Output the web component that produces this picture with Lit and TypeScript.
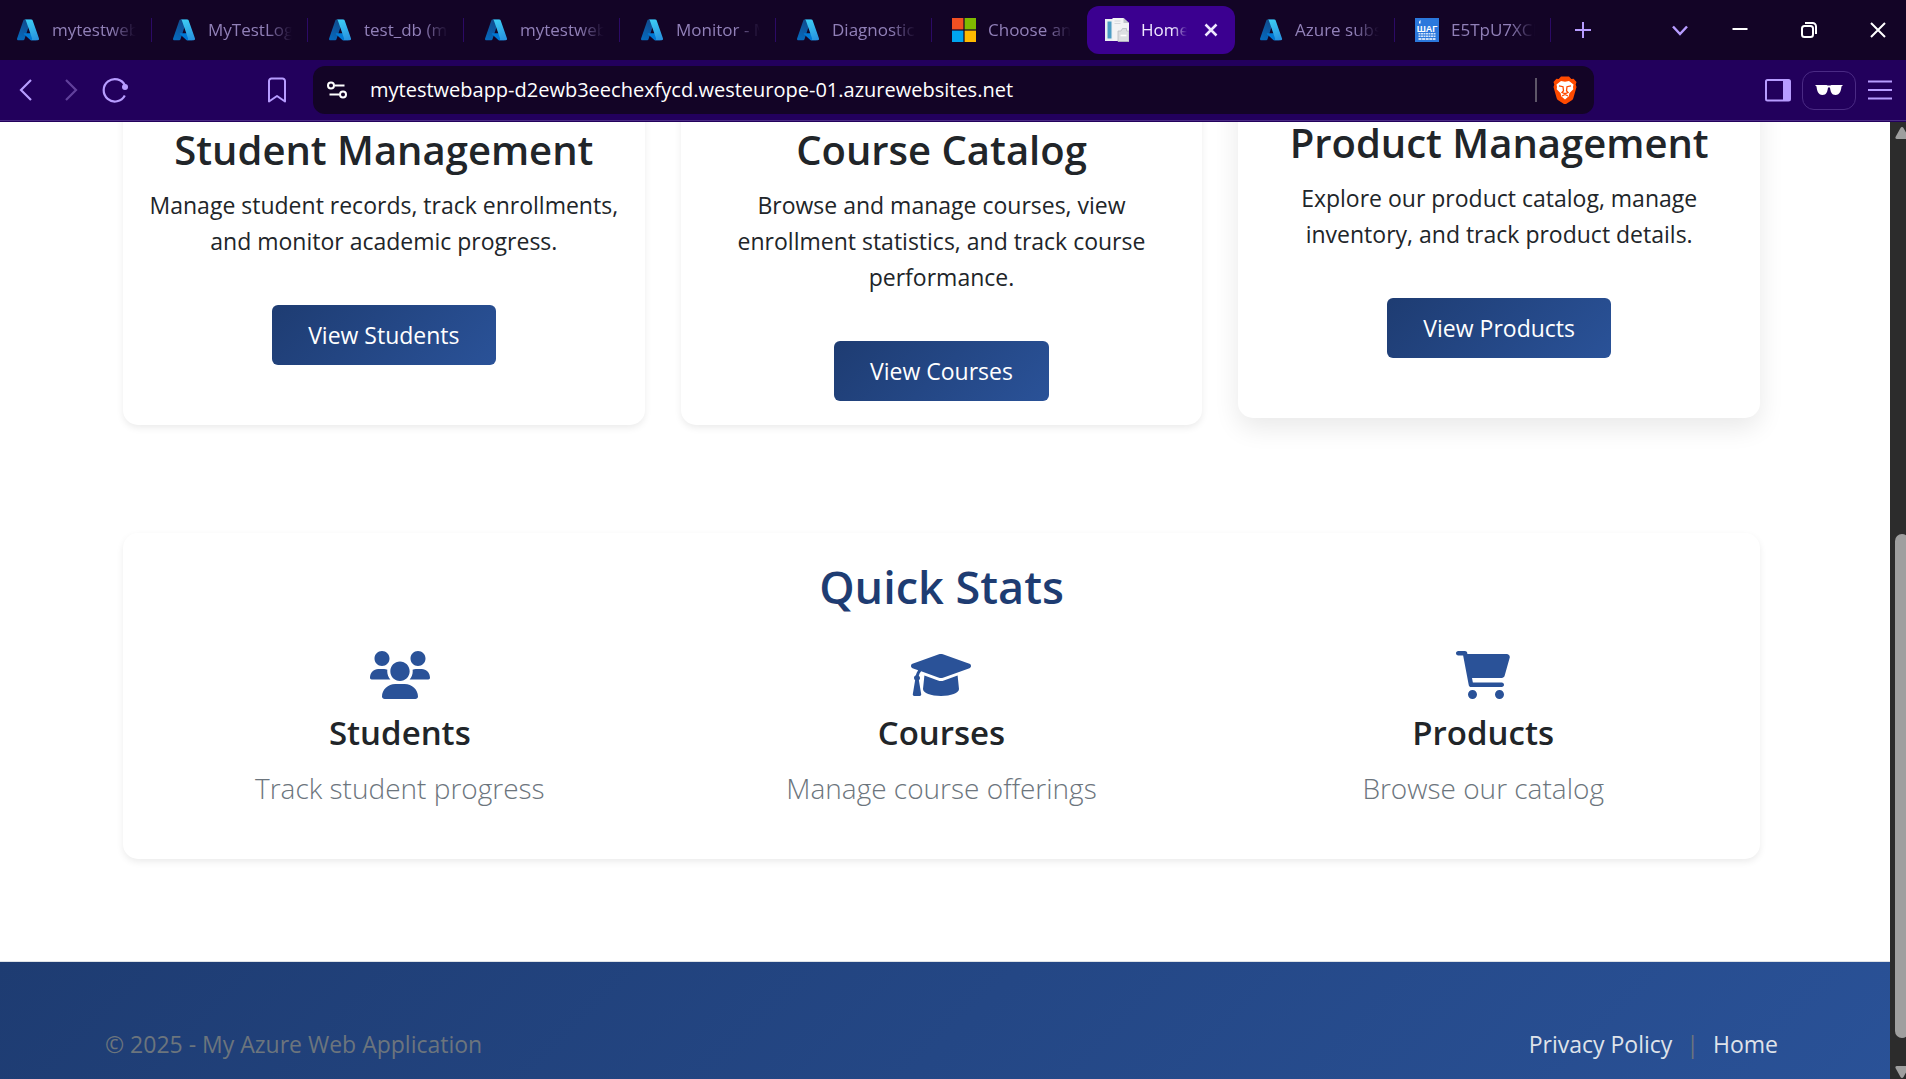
import { LitElement, html, css, svg } from "lit";
import { customElement, property } from "lit/decorators.js";
import { classMap } from "lit/directives/class-map.js";

type Favicon = "azure" | "microsoft" | "page" | "step";

interface Tab {
  title: string;
  icon: Favicon;
  active?: boolean;
}

interface Feature {
  title: string;
  text: string;
  action: string;
  raised?: boolean;
}

interface Stat {
  title: string;
  text: string;
  box: string;
  path: string;
}

const TABS: Tab[] = [
  { title: "mytestwebapp", icon: "azure" },
  { title: "MyTestLogs", icon: "azure" },
  { title: "test_db (mytest", icon: "azure" },
  { title: "mytestwebapp", icon: "azure" },
  { title: "Monitor - M", icon: "azure" },
  { title: "Diagnostic s", icon: "azure" },
  { title: "Choose an a", icon: "microsoft" },
  { title: "Home P", icon: "page", active: true },
  { title: "Azure subsc", icon: "azure" },
  { title: "E5TpU7XCk", icon: "step" },
];

const FEATURES: Feature[] = [
  {
    title: "Student Management",
    text: "Manage student records, track enrollments, and monitor academic progress.",
    action: "View Students",
  },
  {
    title: "Course Catalog",
    text: "Browse and manage courses, view enrollment statistics, and track course performance.",
    action: "View Courses",
  },
  {
    title: "Product Management",
    text: "Explore our product catalog, manage inventory, and track product details.",
    action: "View Products",
    raised: true,
  },
];

const STATS: Stat[] = [
  {
    title: "Students",
    text: "Track student progress",
    box: "0 0 640 512",
    path: "M319.9 320c57.41 0 103.1-46.56 103.1-104c0-57.44-46.54-104-103.1-104c-57.41 0-103.1 46.56-103.1 104C215.9 273.4 262.5 320 319.9 320zM369.9 352H270.1C191.6 352 128 411.7 128 485.3C128 500.1 140.7 512 156.4 512h327.2C499.3 512 512 500.1 512 485.3C512 411.7 448.4 352 369.9 352zM512 160c44.18 0 80-35.82 80-80S556.2 0 512 0c-44.18 0-80 35.82-80 80S467.8 160 512 160zM183.9 216c0-5.449 .9824-10.63 1.609-15.91C174.6 194.1 162.6 192 149.9 192H88.08C39.44 192 0 233.8 0 285.3C0 295.6 7.887 304 17.62 304h199.5C196.7 280.2 183.9 249.7 183.9 216zM128 160c44.18 0 80-35.82 80-80S172.2 0 128 0C83.82 0 48 35.82 48 80S83.82 160 128 160zM551.9 192h-61.84c-12.8 0-24.88 3.037-35.86 8.24C454.8 205.5 455.8 210.6 455.8 216c0 33.71-12.78 64.21-33.16 88h199.7C632.1 304 640 295.6 640 285.3C640 233.8 600.6 192 551.9 192z",
  },
  {
    title: "Courses",
    text: "Manage course offerings",
    box: "0 0 640 512",
    path: "M623.1 136.9l-282.7-101.2c-13.73-4.91-28.7-4.91-42.43 0L16.05 136.9C6.438 140.4 0 149.6 0 160s6.438 19.65 16.05 23.09L76.07 204.6c-11.89 15.8-20.26 34.16-24.55 53.95C40.05 263.4 32 274.8 32 288c0 9.953 4.814 18.49 11.94 24.36l-24.83 149C17.48 471.1 25 480 34.89 480H93.11c9.887 0 17.41-8.879 15.78-18.63l-24.83-149C91.19 306.5 96 297.1 96 288c0-10.29-5.174-19.03-12.72-24.89c4.252-17.76 12.88-33.82 24.94-47.03l190.6 68.23c13.73 4.91 28.7 4.91 42.43 0l282.7-101.2C633.6 179.6 640 170.4 640 160S633.6 140.4 623.1 136.9zM351.1 314.4C341.7 318.1 330.9 320 320 320c-10.92 0-21.69-1.867-32-5.555L142.8 262.5L128 405.3C128 446.6 213.1 480 320 480c105.1 0 192-33.4 192-74.67l-14.78-142.9L351.1 314.4z",
  },
  {
    title: "Products",
    text: "Browse our catalog",
    box: "0 0 576 512",
    path: "M96 0C107.5 0 117.4 8.19 119.6 19.51L121.1 32H541.8C562.1 32 578.3 52.25 572.6 72.66L518.6 264.7C514.7 278.5 502.1 288 487.8 288H170.7L179.9 336H488C501.3 336 512 346.7 512 360C512 373.3 501.3 384 488 384H159.1C148.5 384 138.6 375.8 136.4 364.5L76.14 48H24C10.75 48 0 37.25 0 24C0 10.75 10.75 0 24 0H96zM128 464C128 437.5 149.5 416 176 416C202.5 416 224 437.5 224 464C224 490.5 202.5 512 176 512C149.5 512 128 490.5 128 464zM512 464C512 490.5 490.5 512 464 512C437.5 512 416 490.5 416 464C416 437.5 437.5 416 464 416C490.5 416 512 437.5 512 464z",
  },
];

const FAVICONS = {
  azure: svg`
    <defs>
      <linearGradient id="az-left" x1="0.6" y1="0" x2="0.3" y2="1">
        <stop offset="0" stop-color="#114a8b" /><stop offset="1" stop-color="#0669bc" />
      </linearGradient>
      <linearGradient id="az-right" x1="0.4" y1="0" x2="0.7" y2="1">
        <stop offset="0" stop-color="#3ccbf4" /><stop offset="1" stop-color="#2892df" />
      </linearGradient>
    </defs>
    <path d="M8.6 1.5H15L8.5 21.3a1.4 1.4 0 0 1-1.3 1H2.4A1.3 1.3 0 0 1 1.1 20.5L7.3 2.5a1.4 1.4 0 0 1 1.3-1z" fill="url(#az-left)" />
    <path d="M18 15.2H8.4a.6.6 0 0 0-.4 1.1l6.300 5.700c.2.2.5.3.8.3h5.400z" fill="#0078d4" />
    <path d="M16.7 2.5a1.4 1.4 0 0 0-1.300-1H8.6c.6 0 1.1.4 1.3 1l6.2 18a1.4 1.4 0 0 1-1.3 1.800h6.900a1.4 1.4 0 0 0 1.3-1.800z" fill="url(#az-right)" />`,
  microsoft: svg`
    <path d="M0 0h11.4v11.4H0z" fill="#f25022" />
    <path d="M12.6 0H24v11.4H12.6z" fill="#7fba00" />
    <path d="M0 12.6h11.4V24H0z" fill="#00a4ef" />
    <path d="M12.6 12.6H24V24H12.6z" fill="#ffb900" />`,
  page: svg`
    <path d="M0 1h9v22H0z" fill="#e9eef2" />
    <path d="M2.500 3.500h4v17h-4z" fill="#4a9cc4" />
    <path d="M7.500 0h11L24 5v18H7.500z" fill="#f3f4f5" />
    <path d="M18.500 0 24 5h-5.500z" fill="#c2c7cc" />
    <path d="M9.500 3h6M9.500 5.500h6" stroke="#d4d8dc" />
    <path d="M13 13h3l1.500-2.500h4V13H24v10.500H13z" fill="#dcdfe2" stroke="#b8bdc2" stroke-width=".8" />
    <path d="M15.500 17.500h6" stroke="#fff" stroke-width="1.600" />`,
  step: svg`
    <path d="M0 0h24v24H0z" fill="#2b78dc" />
    <path d="M4 5.500V3.500L5.500 2v3.500z" fill="#fff" />
    <text x="12" y="13.500" text-anchor="middle" font-family="Liberation Sans Narrow, Liberation Sans, sans-serif" font-weight="700" font-size="9" fill="#fff">ШАГ</text>
    <path d="M3.500 15.800h17M3.500 18.300h17" stroke="#cfe2fa" stroke-width="1.500" stroke-dasharray="2 .5" />
    <path d="M3.500 21h17" stroke="#fff" stroke-width="1.600" stroke-dasharray="3 .6" />`,
};

@customElement("browser-tab")
class BrowserTab extends LitElement {
  @property({ attribute: false }) tab!: Tab;
  @property({ type: Boolean, reflect: true }) active = false;
  @property({ type: Boolean, reflect: true }) divided = false;

  static styles = css`
    :host {
      display: flex;
      align-items: center;
      flex: 0 1 135px;
      height: 48px;
      min-width: 0;
    }
    :host([divided]) {
      flex-basis: 156px;
      background: linear-gradient(#2c0a66, #2c0a66) right 20px center / 1px 24px no-repeat;
    }
    :host([active]) {
      flex-basis: 148px;
      box-sizing: border-box;
      margin-right: 24px;
      padding: 0 12px 0 18px;
      border-radius: 12px;
      background: #3b0090;
    }
    .select {
      display: flex;
      align-items: center;
      gap: 12px;
      min-width: 0;
      flex: 1;
      height: 100%;
      padding: 0 16px 0 0;
      border: 0;
      background: none;
      color: #9180b8;
      font: 17px/24px "Open Sans", "Noto Sans", sans-serif;
      text-align: left;
    }
    .select.divided {
      padding-right: 36px;
    }
    .icon {
      display: block;
      width: 24px;
      height: 24px;
      flex: none;
    }
    .title {
      flex: 1;
      min-width: 0;
      overflow: hidden;
      white-space: nowrap;
      mask-image: linear-gradient(90deg, #000 70%, transparent);
    }
    .select.active {
      color: #efe8ff;
      padding-right: 12px;
    }
    .close {
      width: 24px;
      height: 24px;
      padding: 0;
      border: 0;
      background: none;
      color: #efe8ff;
    }
  `;

  render() {
    return html`
      <button class=${classMap({ select: true, active: this.active, divided: this.divided })}>
        <svg class="icon" viewBox="0 0 24 24">${FAVICONS[this.tab.icon]}</svg>
        <span class="title">${this.tab.title}</span>
      </button>
      ${this.active
        ? html`<button class="close" aria-label="Close tab">
            <svg class="icon" viewBox="0 0 24 24" fill="none" stroke="currentColor" stroke-width="2.500">
              <path d="M6.500 6.500l11 11M17.500 6.500l-11 11" />
            </svg>
          </button>`
        : null}
    `;
  }
}

@customElement("browser-chrome")
class BrowserChrome extends LitElement {
  static styles = css`
    :host {
      display: block;
      font-family: "Open Sans", "Noto Sans", sans-serif;
    }
    button {
      display: grid;
      place-items: center;
      flex: none;
      padding: 0;
      border: 0;
      background: none;
      color: #b79cff;
    }
    svg {
      display: block;
      fill: none;
      stroke: currentColor;
      stroke-width: 2;
    }
    .solid {
      stroke: none;
    }
    .strip {
      display: flex;
      align-items: center;
      height: 60px;
      padding: 0 16px;
      background: #130426;
    }
    .tabs {
      display: flex;
      align-items: center;
      flex: 0 1 auto;
      min-width: 0;
    }
    .add {
      width: 24px;
      height: 24px;
    }
    .window {
      display: flex;
      align-items: center;
      gap: 45px;
      margin-left: auto;
    }
    .window button {
      width: 24px;
      height: 24px;
      color: #fff;
    }
    .window .search {
      margin-right: -9px;
      color: #b79cff;
    }
    .bar {
      display: flex;
      align-items: center;
      height: 60px;
      padding: 0 12px;
      background: #22005c;
      border-bottom: 1px solid #4a2a84;
      box-shadow: 0 1px #22005c;
    }
    .nav {
      display: flex;
      gap: 16px;
    }
    .nav button,
    .mark {
      width: 28px;
      height: 28px;
    }
    .nav .off {
      color: #61409c;
    }
    .mark {
      margin-left: 136px;
    }
    .address {
      display: flex;
      align-items: center;
      flex: 1;
      height: 48px;
      box-sizing: border-box;
      margin: 0 170px 0 21px;
      padding: 0 16px 0 12px;
      border-radius: 12px;
      background: #130426;
    }
    .address button {
      color: #fff;
    }
    .url {
      flex: 1;
      min-width: 0;
      margin: 0 0 0 21px;
      padding: 0;
      border: 0;
      outline: 0;
      background: none;
      color: #fff;
      font: 20px/28px "Open Sans", "Noto Sans", sans-serif;
    }
    .rule {
      width: 2px;
      height: 24px;
      margin-right: 15px;
      background: #5e5668;
    }
    .tools {
      display: flex;
      align-items: center;
      gap: 10px;
    }
    .private {
      width: 54px;
      height: 39px;
      box-sizing: border-box;
      border: 1px solid #4a2a84;
      border-radius: 12px;
    }
  `;

  render() {
    return html`
      <div class="strip">
        <div class="tabs">
          ${TABS.map(
            (tab, i) => html`<browser-tab
              .tab=${tab}
              ?active=${tab.active}
              ?divided=${!tab.active && !TABS[i + 1]?.active}
            ></browser-tab>`,
          )}
        </div>
        <button class="add" aria-label="New tab">
          <svg width="24" height="24" viewBox="0 0 24 24"><path d="M12 4v16M4 12h16" /></svg>
        </button>
        <div class="window">
          <button class="search" aria-label="Search tabs">
            <svg width="24" height="24" viewBox="0 0 24 24"><path d="M5 8.500l7 7.500 7-7.500" stroke-width="2.500" /></svg>
          </button>
          <button aria-label="Minimize">
            <svg width="24" height="24" viewBox="0 0 24 24"><path d="M4.500 11h15" /></svg>
          </button>
          <button aria-label="Restore">
            <svg width="24" height="24" viewBox="0 0 24 24">
              <rect x="5" y="8" width="11" height="11" rx="2.500" />
              <path d="M8 5h7.500A3.500 3.500 0 0 1 19 8.500V16" />
            </svg>
          </button>
          <button aria-label="Close">
            <svg width="24" height="24" viewBox="0 0 24 24"><path d="M5 5l14 14M19 5L5 19" /></svg>
          </button>
        </div>
      </div>
      <div class="bar">
        <div class="nav">
          <button aria-label="Back">
            <svg width="28" height="28" viewBox="0 0 28 28"><path d="M19 4L9 14l10 10" stroke-width="2.200" /></svg>
          </button>
          <button class="off" aria-label="Forward">
            <svg width="28" height="28" viewBox="0 0 28 28"><path d="M10 4l10 10-10 10" stroke-width="2.200" /></svg>
          </button>
          <button aria-label="Reload">
            <svg width="28" height="28" viewBox="0 0 28 28">
              <path d="M25 9.500A11.200 11.200 0 1 0 24.800 19.500" stroke-width="2.200" />
              <circle cx="25" cy="11" r="3" fill="currentColor" stroke="none" />
            </svg>
          </button>
        </div>
        <button class="mark" aria-label="Bookmark this page">
          <svg width="28" height="28" viewBox="0 0 28 28">
            <path d="M7.500 2.500h11a2.500 2.500 0 0 1 2.500 2.500v20.500l-8-5.500-8 5.500V5a2.500 2.500 0 0 1 2.500-2.500z" stroke-linejoin="round" />
          </svg>
        </button>
        <div class="address">
          <button aria-label="Site settings">
            <svg width="24" height="24" viewBox="0 0 24 24">
              <circle cx="6" cy="7.500" r="3" /><path d="M10 7.500h9.500" />
              <circle cx="18" cy="16.500" r="3" /><path d="M4.500 16.500H14" />
            </svg>
          </button>
          <input
            class="url"
            type="text"
            aria-label="Address"
            value="mytestwebapp-d2ewb3eechexfycd.westeurope-01.azurewebsites.net"
          />
          <span class="rule"></span>
          <button aria-label="Brave Shields">
            <svg class="solid" width="26" height="28" viewBox="0 0 26 28">
              <path d="M9 .5h8l2.300 2.600 2.300-.3L24.500 6l-.8 2.600.8 2.400-3.200 11.200a4 4 0 0 1-1.500 2.100L14 28h-2l-5.800-3.700a4 4 0 0 1-1.500-2.100L1.500 11l.8-2.400L1.500 6l2.900-3.200 2.300.3z" fill="#ff4a00" />
              <path d="M9 5l4 .8L17 5l4.500 3.500-.5 2.500.3 2.200-3.900 4-.6 3L13 23.500l-3.800-3.300-.6-3-3.900-4L5 11l-.5-2.500z" fill="#fff" />
              <path d="M7 9.800l4 .9.500 4-1.500 1.800 3 1.200 3-1.200-1.500-1.800.5-4 4-.9M10 20l3-1.500 3 1.500" fill="none" stroke="#ff4a00" stroke-width="1.300" />
            </svg>
          </button>
        </div>
        <div class="tools">
          <button aria-label="Show sidebar">
            <svg width="28" height="28" viewBox="0 0 28 28">
              <rect x="2" y="4" width="24" height="20.500" rx="1.500" />
              <path d="M19 4h7v20.500h-7z" fill="currentColor" stroke="none" />
            </svg>
          </button>
          <button class="private" aria-label="Private window">
            <svg class="solid" width="28" height="14" viewBox="0 0 28 14">
              <path d="M0 2h11.500q2.500 1 5 0H28l-1.500 1.500c-.5 4-1.500 8.500-6 8.500-4 0-5-3.500-5.500-7.500h-2C12.500 8.500 11.500 12 7.500 12c-4.500 0-5.500-4.500-6-8.500z" fill="#fff" />
            </svg>
          </button>
          <button aria-label="Menu">
            <svg width="28" height="28" viewBox="0 0 28 28"><path d="M2 5.500h24M2 14h24M2 22.500h24" /></svg>
          </button>
        </div>
      </div>
    `;
  }
}

@customElement("feature-card")
class FeatureCard extends LitElement {
  @property({ attribute: false }) feature!: Feature;

  static styles = css`
    :host {
      display: block;
    }
    .card {
      height: 100%;
      box-sizing: border-box;
      padding: 32px 24px 24px;
      border-radius: 15px;
      background: #fff;
      box-shadow: 0 3px 7px rgba(0, 0, 0, 0.08);
      text-align: center;
    }
    .raised {
      transform: translateY(-7px);
      box-shadow: 0 10px 26px rgba(0, 0, 0, 0.09);
    }
    .title {
      margin: 0 0 12px;
      font-size: 40px;
      line-height: 50px;
      font-weight: 600;
    }
    .text {
      margin: 0 0 46px;
      font-size: 23px;
      line-height: 36px;
    }
    .action {
      display: inline-block;
      padding: 12px 36px;
      border-radius: 6px;
      background: linear-gradient(135deg, #1e3c72, #2a5298);
      color: #fff;
      font-size: 23px;
      line-height: 36px;
      text-decoration: none;
    }
  `;

  render() {
    const { title, text, action, raised } = this.feature;
    return html`
      <article class=${classMap({ card: true, raised: !!raised })}>
        <h3 class="title">${title}</h3>
        <p class="text">${text}</p>
        <a class="action" href="#">${action}</a>
      </article>
    `;
  }
}

@customElement("app-root")
class AppRoot extends LitElement {
  static styles = css`
    :host {
      display: flex;
      flex-direction: column;
      height: 100vh;
      overflow: hidden;
      background: #fff;
      color: #212529;
      font-family: "Open Sans", "Noto Sans", sans-serif;
    }
    browser-chrome {
      position: relative;
      z-index: 1;
      flex: none;
    }
    .view {
      display: flex;
      flex: 1;
      min-height: 0;
    }
    .page {
      flex: 1;
      min-width: 0;
      overflow: hidden;
    }
    .main {
      padding: 0 130px 0 123px;
    }
    .features {
      display: grid;
      grid-template-columns: repeat(3, 1fr);
      gap: 36px;
      height: 332px;
      margin-top: -28px;
    }
    .stats {
      margin: 108px 0 102px;
      padding: 24px 6px 48px;
      border-radius: 15px;
      box-shadow: 0 3px 7px rgba(0, 0, 0, 0.08);
      text-align: center;
    }
    .heading {
      margin: 0 0 34px;
      color: #1e3c72;
      font-size: 45px;
      line-height: 60px;
      font-weight: 600;
    }
    .row {
      display: grid;
      grid-template-columns: repeat(3, 1fr);
    }
    .glyph {
      display: block;
      height: 48px;
      margin: 0 auto 12px;
      fill: #2a5298;
    }
    .name {
      margin: 0 0 10px;
      font-size: 33px;
      line-height: 44px;
      font-weight: 600;
    }
    .lead {
      margin: 0;
      color: #6c757d;
      font-size: 28px;
      line-height: 46px;
      font-weight: 300;
    }
    .footer {
      display: flex;
      justify-content: space-between;
      padding: 64px 112px 64px 105px;
      border-top: 1px solid #dee2e6;
      background: linear-gradient(135deg, #1e3c72, #2a5298);
      color: #6c757d;
      font-size: 23px;
      line-height: 36px;
    }
    .links {
      display: flex;
      gap: 14px;
    }
    .link {
      color: #dfe3ea;
      text-decoration: none;
    }
    .scroll {
      display: flex;
      flex-direction: column;
      width: 16px;
      box-sizing: border-box;
      padding: 6px 0 1px 5px;
      overflow: hidden;
      background: #2c2c2c;
    }
    .arrow {
      display: block;
      width: 14px;
      height: 12px;
      fill: #9f9f9f;
    }
    .track {
      display: flex;
      flex-direction: column;
      flex: 1;
      width: 14px;
    }
    .before {
      flex: 394;
    }
    .thumb {
      flex: 503;
      border-radius: 7px;
      background: #9f9f9f;
    }
    .after {
      flex: 28;
    }
  `;

  render() {
    return html`
      <browser-chrome></browser-chrome>
      <div class="view">
        <div class="page">
          <main class="main">
            <section class="features">
              ${FEATURES.map((f) => html`<feature-card .feature=${f}></feature-card>`)}
            </section>
            <section class="stats">
              <h2 class="heading">Quick Stats</h2>
              <div class="row">
                ${STATS.map(
                  (s) => html`<div>
                    <svg class="glyph" viewBox=${s.box}><path d=${s.path} /></svg>
                    <h4 class="name">${s.title}</h4>
                    <p class="lead">${s.text}</p>
                  </div>`,
                )}
              </div>
            </section>
          </main>
          <footer class="footer">
            <span>© 2025 - My Azure Web Application</span>
            <nav class="links">
              <a class="link" href="#">Privacy Policy</a>
              <span>|</span>
              <a class="link" href="#">Home</a>
            </nav>
          </footer>
        </div>
        <div class="scroll">
          <svg class="arrow" viewBox="0 0 14 12"><path d="M7 0q1 0 1.500 1l5 9q.5 2-1.500 2H2q-2 0-1.500-2l5-9Q6 0 7 0z" /></svg>
          <div class="track">
            <div class="before"></div>
            <div class="thumb"></div>
            <div class="after"></div>
          </div>
          <svg class="arrow" viewBox="0 0 14 12"><path d="M7 12q1 0 1.500-1l5-9Q14 0 12 0H2Q0 0 .5 2l5 9q.5 1 1.500 1z" /></svg>
        </div>
      </div>
    `;
  }
}
